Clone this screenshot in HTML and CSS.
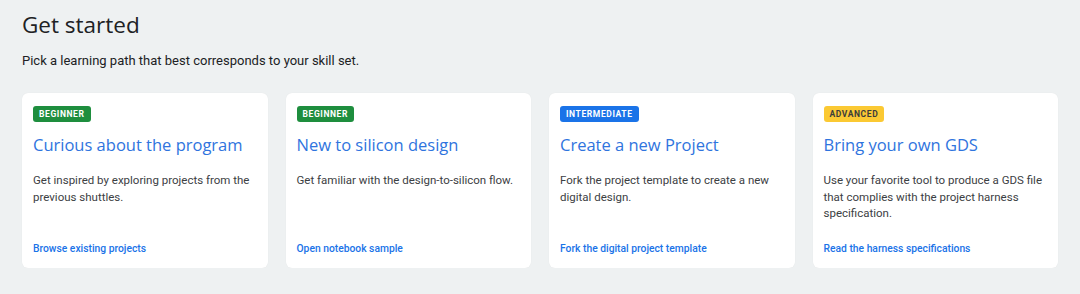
FILE: index.html
```html
<!DOCTYPE html>
<html>
<head>
<meta charset="utf-8">
<link rel="stylesheet" href="styles.css">
</head>
<body>
<main class="page">
  <h1 class="title">Get started</h1>
  <p class="subtitle">Pick a learning path that best corresponds to your skill set.</p>
  <div class="cards">
    <section class="card">
      <span class="badge badge-green">BEGINNER</span>
      <h2 class="card-title">Curious about the program</h2>
      <p class="card-text">Get inspired by exploring projects from the previous shuttles.</p>
      <a class="card-link" href="#">Browse existing projects</a>
    </section>
    <section class="card">
      <span class="badge badge-green">BEGINNER</span>
      <h2 class="card-title">New to silicon design</h2>
      <p class="card-text">Get familiar with the design-to-silicon flow.</p>
      <a class="card-link" href="#">Open notebook sample</a>
    </section>
    <section class="card">
      <span class="badge badge-blue">INTERMEDIATE</span>
      <h2 class="card-title">Create a new Project</h2>
      <p class="card-text">Fork the project template to create a new digital design.</p>
      <a class="card-link" href="#">Fork the digital project template</a>
    </section>
    <section class="card">
      <span class="badge badge-yellow">ADVANCED</span>
      <h2 class="card-title">Bring your own GDS</h2>
      <p class="card-text">Use your favorite tool to produce a GDS file that complies with the project harness specification.</p>
      <a class="card-link" href="#">Read the harness specifications</a>
    </section>
  </div>
</main>
</body>
</html>
```

FILE: styles.css
```css
* { box-sizing: border-box; }
html, body { margin: 0; padding: 0; }
body {
  background: #eef1f2;
  font-family: Roboto, "Liberation Sans", sans-serif;
  color: #202124;
}
.page {
  padding: 10px 22px 0 22px;
}
.title {
  margin: 0;
  font-family: "Open Sans", Roboto, sans-serif;
  font-weight: 400;
  font-size: 22.5px;
  line-height: 30px;
  color: #202124;
}
.subtitle {
  margin: 12px 0 0 0;
  font-size: 13px;
  line-height: 18px;
  color: #202124;
}
.cards {
  display: flex;
  gap: 18px;
  margin-top: 23px;
}
.card {
  flex: 1 1 0;
  height: 175px;
  background: #fff;
  border-radius: 6px;
  padding: 13px 11px 12px 11px;
  display: flex;
  flex-direction: column;
  align-items: flex-start;
  box-shadow: 0 0 1px rgba(0,0,0,0.08);
}
.badge {
  font-size: 8.5px;
  font-weight: 700;
  letter-spacing: 0.6px;
  line-height: 16px;
  height: 16px;
  padding: 0 6px;
  border-radius: 3px;
  color: #fff;
}
.badge-green { background: #1e8e3e; }
.badge-blue { background: #1a73e8; }
.badge-yellow { background: #fbc933; color: #3c3c3c; }
.card-title {
  margin: 11px 0 0 0;
  font-family: "Open Sans", Roboto, sans-serif;
  font-weight: 400;
  font-size: 16.5px;
  line-height: 24px;
  color: #2f74de;
}
.card-text {
  margin: 15px 0 0 0;
  font-size: 11.5px;
  line-height: 16.5px;
  color: #3c4043;
}
.card-link {
  margin-top: auto;
  font-size: 10.3px;
  font-weight: 500;
  line-height: 14px;
  color: #1a73e8;
  text-decoration: none;
}
```
